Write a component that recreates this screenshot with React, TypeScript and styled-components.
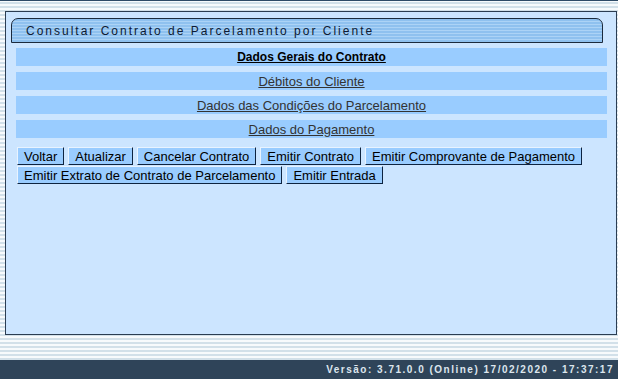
import React from "react";
import styled, { createGlobalStyle } from "styled-components";

const Global = createGlobalStyle`
  html, body { margin: 0; padding: 0; }
  body {
    font-family: "Liberation Sans", Arial, sans-serif;
    background: repeating-linear-gradient(to bottom, #f7fafc 0px, #f7fafc 2px, #d2e0e9 2px, #d2e0e9 4px);
  }
`;

const Page = styled.div`
  display: flex;
  flex-direction: column;
  height: 379px;
  border-top: 1px solid #2e4a66;
  box-sizing: border-box;
`;

const Main = styled.div`
  flex: 1;
  padding: 10px 1px 0 5px;
  display: flex;
  flex-direction: column;
`;

const Panel = styled.div`
  height: 324px;
  box-sizing: border-box;
  border: 1px solid #2b3d52;
  background: #cce5ff;
  padding: 6px 9px 0 10px;
  display: flex;
  flex-direction: column;
`;

const TitleTab = styled.div`
  margin: 0 4px 0 -5px;
  height: 25px;
  box-sizing: border-box;
  border: 1px solid #1c2b3d;
  border-radius: 7px 7px 0 0;
  background: repeating-linear-gradient(to bottom, #8fc1ef 0px, #8fc1ef 2px, #acd3f6 2px, #acd3f6 3px);
  display: flex;
  align-items: center;
  padding-left: 14px;
  font-family: "Liberation Sans", Arial, sans-serif;
  font-size: 12px;
  letter-spacing: 2px;
  color: #0d1a33;
`;

const Sections = styled.div`
  display: flex;
  flex-direction: column;
  gap: 6px;
  margin-top: 5px;
`;

const SectionBar = styled.div`
  height: 18px;
  background: #99ccff;
  display: flex;
  align-items: center;
  justify-content: center;
`;

const SectionLink = styled.a<{ $active?: boolean }>`
  font-size: ${(p) => (p.$active ? "12px" : "13px")};
  font-weight: ${(p) => (p.$active ? "bold" : "normal")};
  color: ${(p) => (p.$active ? "#000" : "#333")};
  text-decoration: underline;
  cursor: pointer;
  line-height: 15px;
`;

const ButtonRow = styled.div`
  display: flex;
  flex-wrap: wrap;
  gap: 1px 4px;
  margin: 9px 0 0 1px;
`;

const Button = styled.button`
  height: 18px;
  padding: 0 6px;
  box-sizing: border-box;
  background: #99ccff;
  border-style: solid;
  border-width: 1px;
  border-color: #e8f3ff #0d2340 #0d2340 #e8f3ff;
  font-family: "Liberation Sans", Arial, sans-serif;
  font-size: 13px;
  line-height: 15px;
  color: #000;
`;

const Footer = styled.div`
  height: 19px;
  background: #2f4459;
  display: flex;
  align-items: center;
  justify-content: flex-end;
  padding-right: 4px;
  font-family: "Liberation Sans", Arial, sans-serif;
  font-weight: bold;
  font-size: 10px;
  letter-spacing: 1.5px;
  color: #dde6ee;
`;

const sections = [
  "Dados Gerais do Contrato",
  "Débitos do Cliente",
  "Dados das Condições do Parcelamento",
  "Dados do Pagamento",
];

const buttons = [
  "Voltar",
  "Atualizar",
  "Cancelar Contrato",
  "Emitir Contrato",
  "Emitir Comprovante de Pagamento",
  "Emitir Extrato de Contrato de Parcelamento",
  "Emitir Entrada",
];

export default function App() {
  return (
    <>
      <Global />
      <Page>
        <Main>
          <Panel>
            <TitleTab>Consultar Contrato de Parcelamento por Cliente</TitleTab>
            <Sections>
              {sections.map((s, i) => (
                <SectionBar key={s}>
                  <SectionLink $active={i === 0}>{s}</SectionLink>
                </SectionBar>
              ))}
            </Sections>
            <ButtonRow>
              {buttons.map((b) => (
                <Button key={b}>{b}</Button>
              ))}
            </ButtonRow>
          </Panel>
        </Main>
        <Footer>Versão: 3.71.0.0 (Online) 17/02/2020 - 17:37:17</Footer>
      </Page>
    </>
  );
}
